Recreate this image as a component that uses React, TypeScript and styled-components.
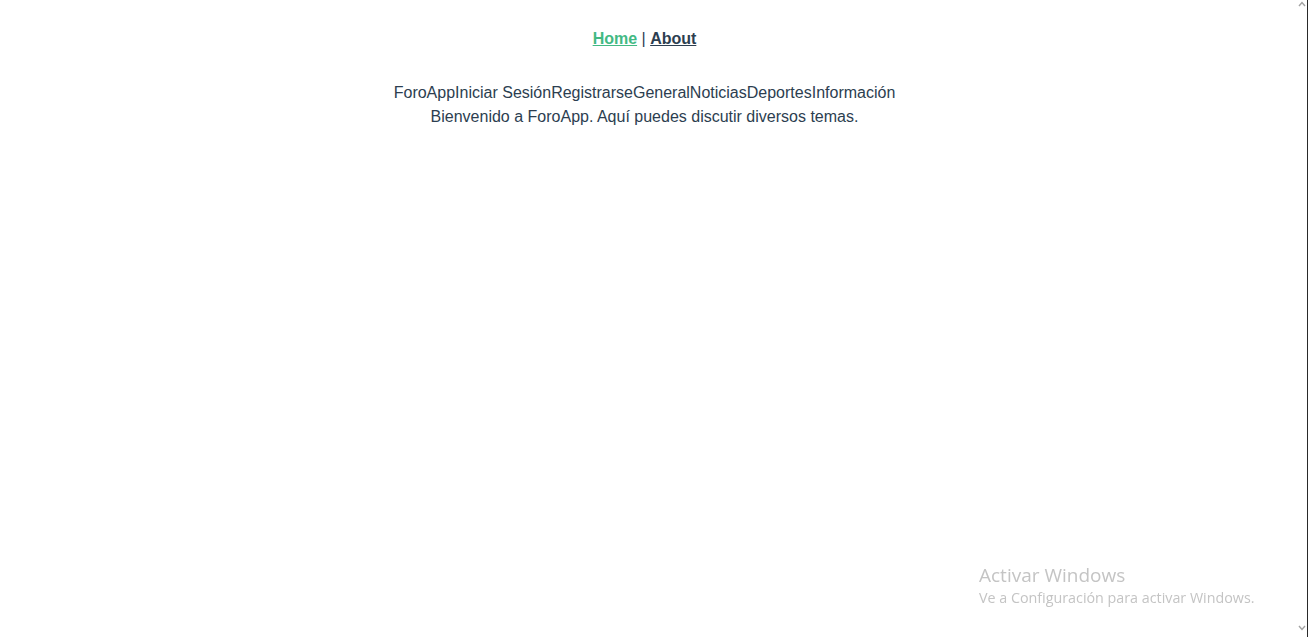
import styled, { createGlobalStyle } from 'styled-components';

const GlobalStyle = createGlobalStyle`
  html, body {
    margin: 0;
    padding: 0;
    background: #ffffff;
  }
  body {
    overflow: hidden;
  }
`

const Page = styled.div`
  display: flex;
  min-height: 637px;
`

const AppRoot = styled.div`
  flex: 1;
  font-family: Avenir, Helvetica, "Liberation Sans", Arial, sans-serif;
  -webkit-font-smoothing: antialiased;
  text-align: center;
  color: #2c3e50;
`

const Nav = styled.nav`
  padding: 30px;
  font-size: 16px;
  line-height: 18px;
`

const NavLink = styled.a<{ $active?: boolean }>`
  font-weight: bold;
  color: ${p => (p.$active ? '#42b983' : '#2c3e50')};
  text-decoration: underline;
  cursor: pointer;
`

const Content = styled.div`
  padding-top: 3px;
  font-size: 16px;
  line-height: 24px;
`

const Header = styled.div`
  display: flex;
  justify-content: center;
`

const HeaderItem = styled.span``

const Welcome = styled.p`
  margin: 0;
`

const Watermark = styled.div`
  position: fixed;
  left: 979px;
  top: 562px;
  font-family: "Segoe UI", "Open Sans", "Noto Sans", sans-serif;
  color: #c4c4c4;
  text-align: left;
`

const WatermarkTitle = styled.div`
  font-size: 19px;
  line-height: 26px;
`

const WatermarkSub = styled.div`
  font-size: 14.3px;
  line-height: 20px;
`

const Scrollbar = styled.div`
  width: 19px;
  height: 637px;
  display: flex;
  flex-direction: column;
  justify-content: space-between;
  align-items: flex-end;
  padding: 1px 1px 6px 0;
  box-sizing: border-box;
  border-right: 1px solid #2a2a2a;
`

const Arrow = ({ up }: { up?: boolean }) => (
  <svg width="8" height="6" viewBox="0 0 8 6">
    <path
      d={up ? 'M1 5 L4 1.5 L7 5' : 'M1 1 L4 4.5 L7 1'}
      fill="none"
      stroke="#a3a3a3"
      strokeWidth="1.4"
    />
  </svg>
)

const headerItems = ['ForoApp', 'Iniciar Sesión', 'Registrarse', 'General', 'Noticias', 'Deportes', 'Información']

export default function App() {
  return (
    <>
      <GlobalStyle />
      <Page>
        <AppRoot>
          <Nav>
            <NavLink $active>Home</NavLink> | <NavLink>About</NavLink>
          </Nav>
          <Content>
            <Header>
              {headerItems.map(item => (
                <HeaderItem key={item}>{item}</HeaderItem>
              ))}
            </Header>
            <Welcome>Bienvenido a ForoApp. Aquí puedes discutir diversos temas.</Welcome>
          </Content>
        </AppRoot>
        <Scrollbar>
          <Arrow up />
          <Arrow />
        </Scrollbar>
      </Page>
      <Watermark>
        <WatermarkTitle>Activar Windows</WatermarkTitle>
        <WatermarkSub>Ve a Configuración para activar Windows.</WatermarkSub>
      </Watermark>
    </>
  )
}
